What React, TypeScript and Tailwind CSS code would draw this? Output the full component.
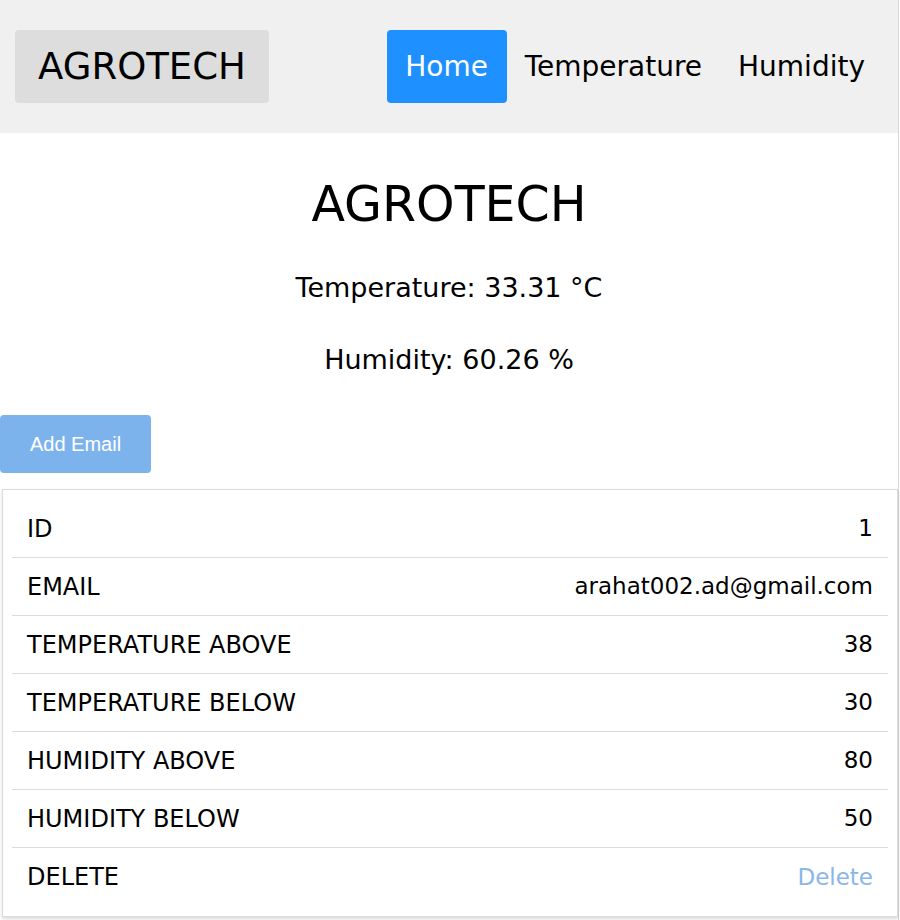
export default function App() {
  const rows = [
    { label: "ID", value: "1" },
    { label: "EMAIL", value: "arahat002.ad@gmail.com" },
    { label: "TEMPERATURE ABOVE", value: "38" },
    { label: "TEMPERATURE BELOW", value: "30" },
    { label: "HUMIDITY ABOVE", value: "80" },
    { label: "HUMIDITY BELOW", value: "50" },
  ]

  return (
    <div className="min-h-[920px] bg-white text-black border-r border-[#d8d8d8] w-[899px]" style={{ fontFamily: '"DejaVu Sans", "Noto Sans", sans-serif' }}>
      <nav className="h-[133px] bg-[#f0f0f0] flex items-center justify-between pl-[15px] pr-[33px]">
        <div className="h-[73px] w-[254px] bg-[#dddddd] rounded-[4px] flex items-center justify-center text-[37px]">
          AGROTECH
        </div>
        <div className="flex items-center text-[28px]">
          <a className="h-[73px] w-[120px] bg-[#1e90ff] text-white rounded-[4px] flex items-center justify-center">Home</a>
          <a className="px-[18px] h-[73px] flex items-center">Temperature</a>
          <a className="pl-[18px] h-[73px] flex items-center">Humidity</a>
        </div>
      </nav>

      <div className="text-center">
        <h1 className="text-[49px] pt-[42px] leading-[60px]">AGROTECH</h1>
        <p className="text-[27px] mt-[36px] leading-[34px]">Temperature: 33.31 °C</p>
        <p className="text-[27px] mt-[38px] leading-[34px]">Humidity: 60.26 %</p>
      </div>

      <button className="mt-[38px] h-[58px] w-[151px] bg-[#7db3ec] text-white rounded-[4px] text-[20px]" style={{ fontFamily: '"Liberation Sans", Arial, sans-serif' }}>
        Add Email
      </button>

      <div className="ml-[2px] mt-[16px] w-[896px] border border-[#dcdcdc] shadow-[0_2px_3px_rgba(0,0,0,0.15)] px-[9px] pt-[10px] pb-[10px]">
        {rows.map((r) => (
          <div key={r.label} className="h-[58px] flex items-center justify-between px-[15px] border-b border-[#dcdcdc] text-[24px]">
            <span>{r.label}</span>
            <span className="text-[23px]">{r.value}</span>
          </div>
        ))}
        <div className="h-[58px] flex items-center justify-between px-[15px] text-[24px]">
          <span>DELETE</span>
          <span className="text-[23px] text-[#8ab6e8]">Delete</span>
        </div>
      </div>
    </div>
  )
}
